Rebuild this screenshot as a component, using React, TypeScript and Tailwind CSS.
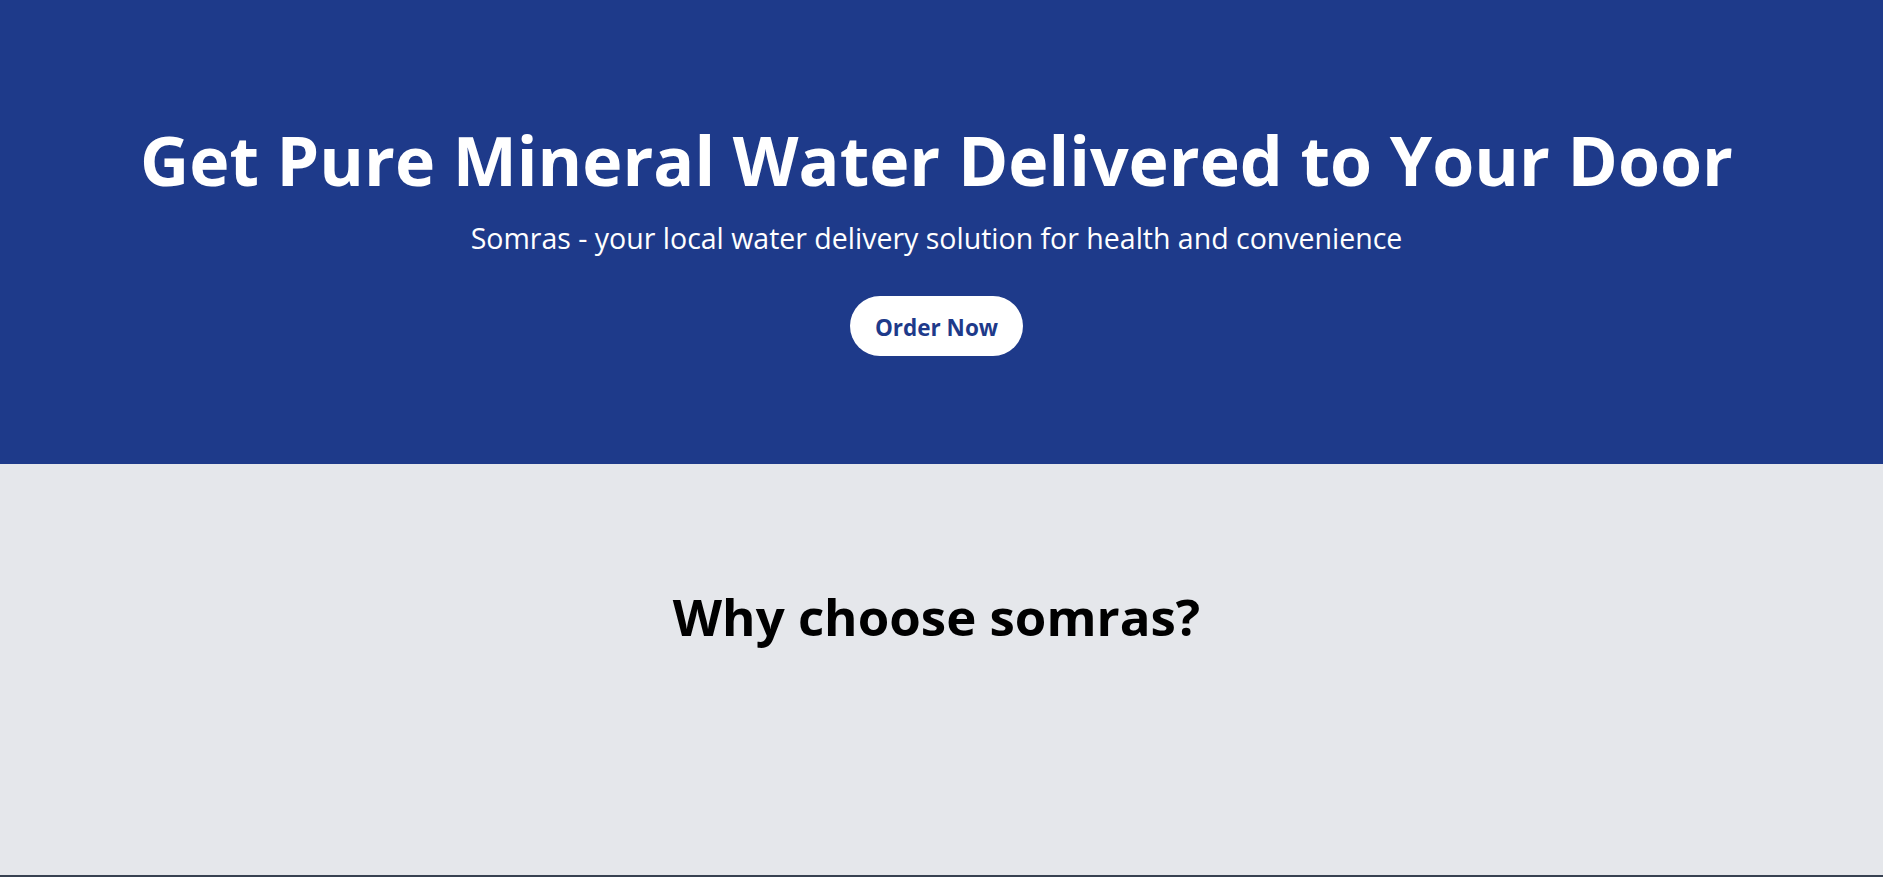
export default function App() {
  return (
    <div className="h-[877px] flex flex-col bg-[#e5e7eb] overflow-hidden" style={{ fontFamily: '"Open Sans", "Noto Sans", sans-serif' }}>
      <section className="h-[464px] shrink-0 bg-[#1e3a8a] text-white flex flex-col items-center pr-[10px] pt-[126px]">
        <h1 className="text-[68px] leading-none font-bold text-center">
          Get Pure Mineral Water Delivered to Your Door
        </h1>
        <p className="mt-[25px] text-[28.5px] leading-[38px]">
          Somras - your local water delivery solution for health and convenience
        </p>
        <button className="mt-[39px] h-[60px] px-[25px] pt-[3px] rounded-full bg-white text-[#1e3a8a] text-[22.5px] font-bold">
          Order Now
        </button>
      </section>

      <section className="flex-1 flex flex-col items-center pr-[10px] pt-[127px]">
        <h2 className="text-[51px] leading-none font-bold text-black">Why choose somras?</h2>
      </section>

      <footer className="h-[2px] shrink-0 bg-[#374151]" />
    </div>
  )
}
